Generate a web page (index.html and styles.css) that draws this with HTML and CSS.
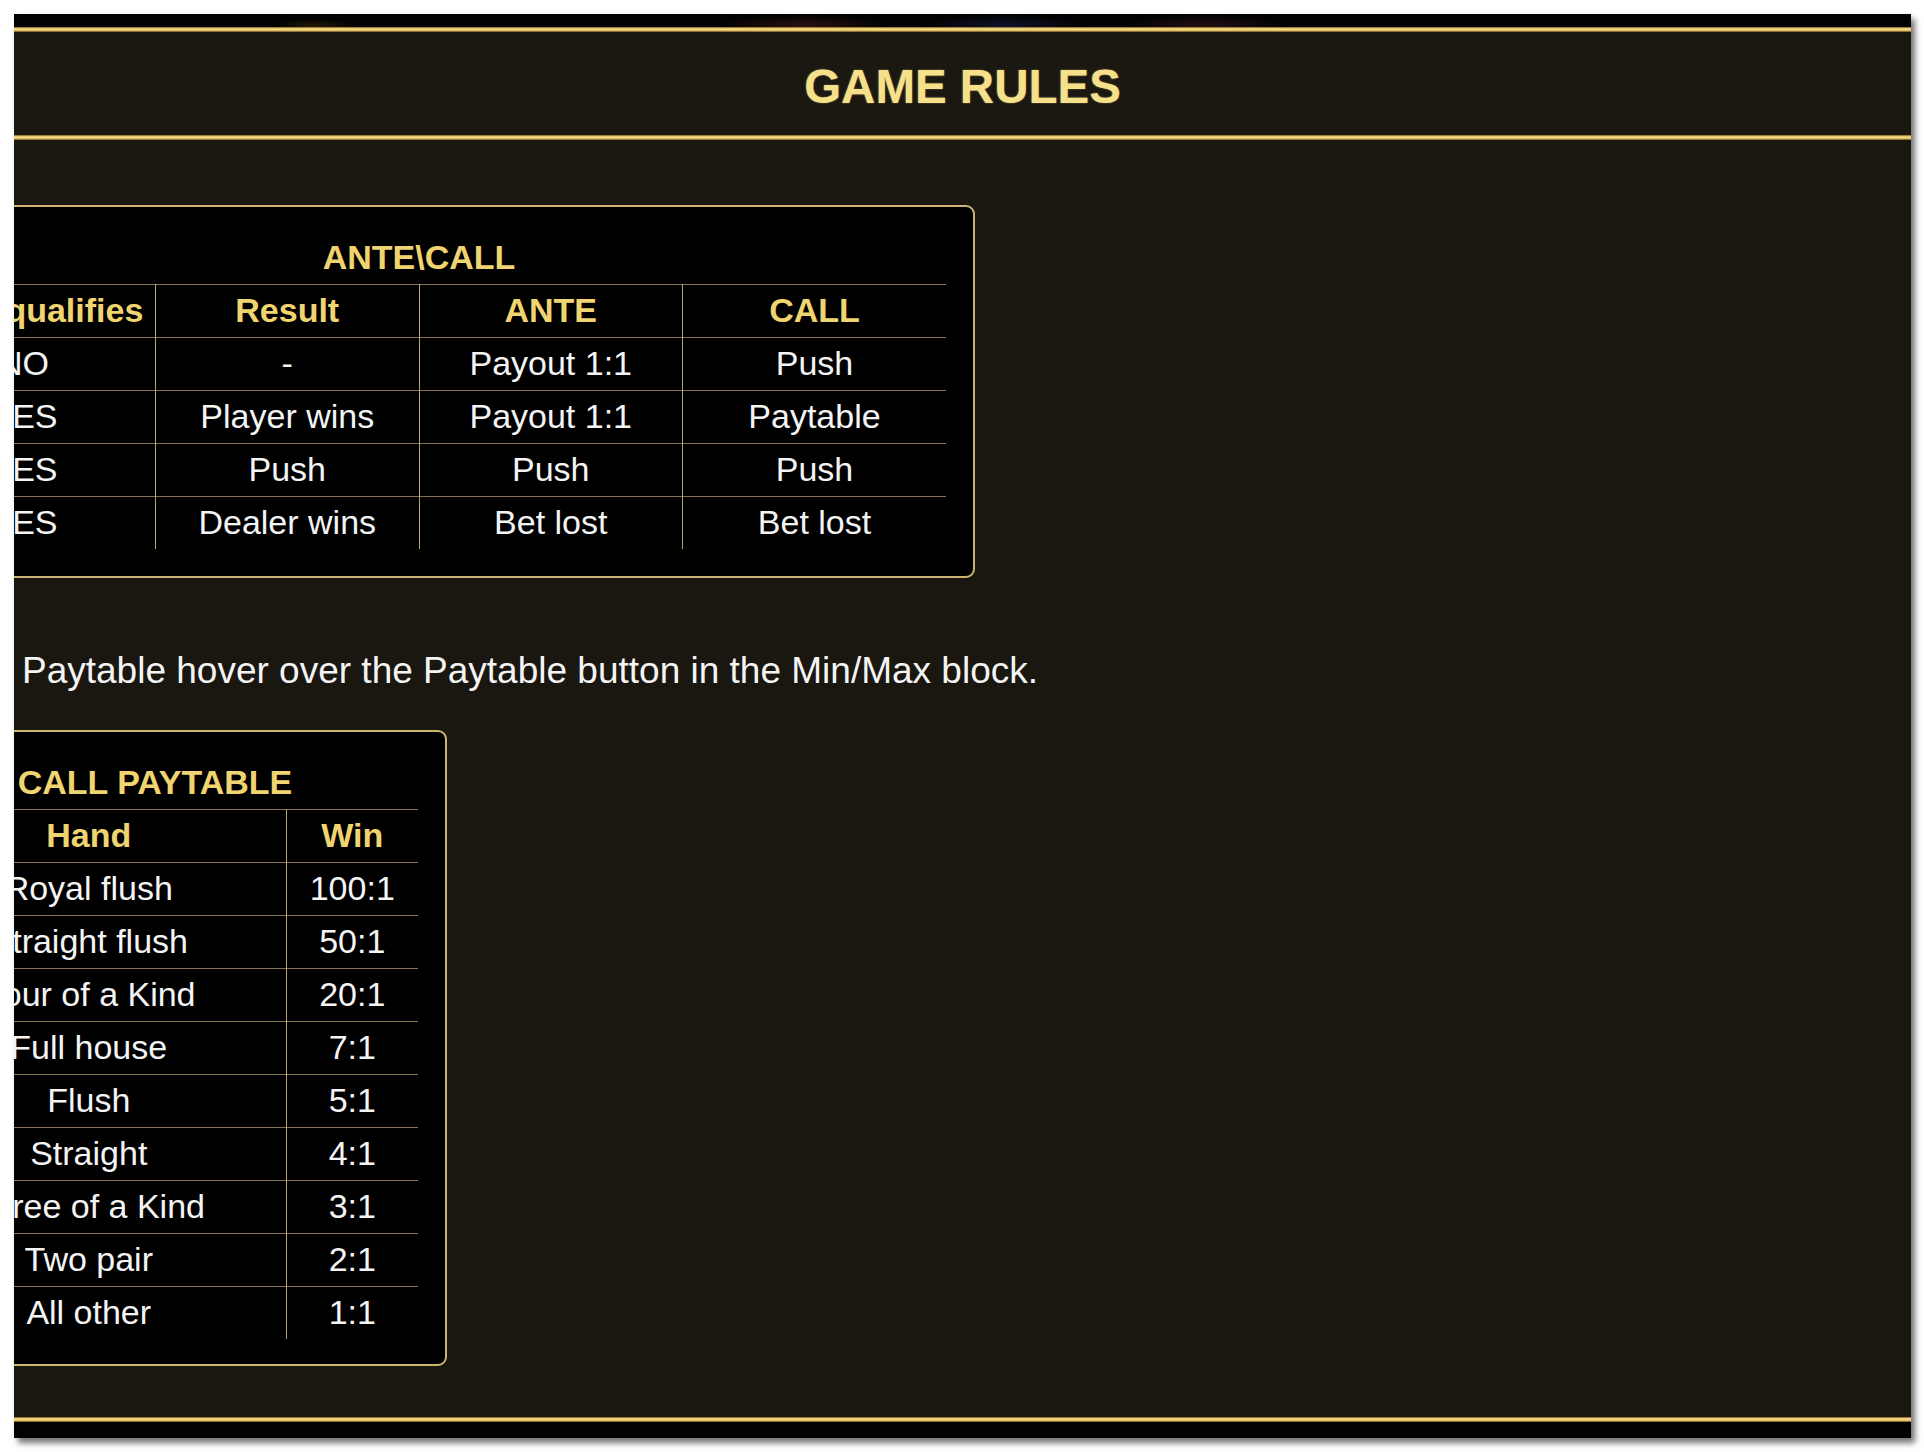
FILE: index.html
```html
<!DOCTYPE html>
<html lang="en">
<head>
<meta charset="utf-8">
<title>Game Rules</title>
<link rel="stylesheet" href="styles.css">
</head>
<body>
<div class="frame">
  <div class="topbar"><div class="topbar-art"></div></div>
  <div class="goldline"></div>
  <header class="title-band"><h1 class="title">GAME RULES</h1></header>
  <div class="goldline"></div>
  <main class="content">
    <section class="panel panel-ante">
      <table class="rules ante">
        <colgroup><col class="c-q"><col class="c-r"><col class="c-a"><col class="c-c"></colgroup>
        <thead>
          <tr class="title-row"><th colspan="4">ANTE\CALL</th></tr>
          <tr class="head-row"><th class="h-first">Dealer qualifies</th><th>Result</th><th>ANTE</th><th>CALL</th></tr>
        </thead>
        <tbody>
          <tr><td>NO</td><td>-</td><td>Payout 1:1</td><td>Push</td></tr>
          <tr><td>YES</td><td>Player wins</td><td>Payout 1:1</td><td>Paytable</td></tr>
          <tr><td>YES</td><td>Push</td><td>Push</td><td>Push</td></tr>
          <tr class="last"><td>YES</td><td>Dealer wins</td><td>Bet lost</td><td>Bet lost</td></tr>
        </tbody>
      </table>
    </section>
    <p class="note">Paytable hover over the Paytable button in the Min/Max block.</p>
    <section class="panel panel-pay">
      <table class="rules pay">
        <colgroup><col class="c-hand"><col class="c-win"></colgroup>
        <thead>
          <tr class="title-row"><th colspan="2">CALL PAYTABLE</th></tr>
          <tr class="head-row"><th>Hand</th><th>Win</th></tr>
        </thead>
        <tbody>
          <tr><td>Royal flush</td><td>100:1</td></tr>
          <tr><td>Straight flush</td><td>50:1</td></tr>
          <tr><td>Four of a Kind</td><td>20:1</td></tr>
          <tr><td>Full house</td><td>7:1</td></tr>
          <tr><td>Flush</td><td>5:1</td></tr>
          <tr><td>Straight</td><td>4:1</td></tr>
          <tr><td>Three of a Kind</td><td>3:1</td></tr>
          <tr><td>Two pair</td><td>2:1</td></tr>
          <tr class="last"><td>All other</td><td>1:1</td></tr>
        </tbody>
      </table>
    </section>
  </main>
  <div class="goldline"></div>
  <div class="bottombar"></div>
</div>
</body>
</html>
```

FILE: styles.css
```css
* { box-sizing: border-box; }
html, body { margin: 0; padding: 0; background: #ffffff; }
body { width: 1924px; height: 1452px; overflow: hidden; font-family: "Liberation Sans", Arial, sans-serif; }

.frame {
  position: relative;
  margin: 14px 0 0 14px;
  width: 1897px;
  height: 1424px;
  display: flex;
  flex-direction: column;
  background: #1a1610;
  box-shadow: 4px 5px 6px rgba(0, 0, 0, 0.55);
}

.topbar {
  height: 13px;
  flex: none;
  background: #020202;
  overflow: hidden;
  position: relative;
}
.topbar-art {
  position: absolute;
  left: 230px; right: 560px; top: 0; bottom: 0;
  background:
    radial-gradient(ellipse 60px 14px at 70px 14px, rgba(110, 80, 30, 0.35), transparent 70%),
    radial-gradient(ellipse 120px 16px at 560px 12px, rgba(120, 50, 40, 0.35), transparent 70%),
    radial-gradient(ellipse 120px 16px at 760px 12px, rgba(40, 50, 120, 0.35), transparent 70%),
    radial-gradient(ellipse 120px 16px at 960px 12px, rgba(110, 50, 60, 0.3), transparent 70%);
}

.goldline {
  height: 5px;
  flex: none;
  background: linear-gradient(to bottom, #7a5d22 0%, #e9c96f 30%, #f7dd8a 55%, #c9a550 80%, #5a4218 100%);
}

.title-band {
  height: 103px;
  flex: none;
  padding-top: 9px;
  background: #1b1711;
  text-align: center;
}
.title {
  margin: 0;
  font-size: 47.5px;
  line-height: 91px;
  font-weight: bold;
  color: #f6e08a;
  text-shadow: 0 0 2px rgba(246, 224, 138, 0.5);
}

.content {
  flex: 1;
  overflow: hidden;
  padding-top: 65px;
  background: #1a1610;
}

.panel {
  margin-left: -151px;
  background: #000000;
  border: 2px solid #cdb372;
  border-radius: 9px;
}
.panel-ante { width: 1112px; padding: 24px 27px 27px 27px; }
.panel-pay { width: 584px; padding: 24px 27px 25px 27px; }

.rules {
  border-collapse: collapse;
  table-layout: fixed;
  width: 100%;
  font-size: 34px;
  color: #f4f4f4;
}
.rules th, .rules td {
  padding: 0;
  height: 53px;
  text-align: center;
  vertical-align: middle;
  white-space: nowrap;
  overflow: visible;
}
.rules th { color: #f0d46f; font-weight: bold; }
.rules tr { border-bottom: 1.5px solid #847553; }
.rules tr.last { border-bottom: none; }
.rules .head-row th + th,
.rules tbody td + td { border-left: 1px solid #b9a46c; }
.rules .h-first { padding-right: 26px; }

.ante col { width: 25%; }
.pay .c-hand { width: 394px; }
.pay .c-win { width: 132px; }

.note {
  margin: 72px 0 38px 0;
  padding-left: 8px;
  font-size: 37px;
  line-height: 42px;
  color: #f4f4f4;
}

.bottombar {
  height: 16px;
  flex: none;
  background: #020202;
}
```
